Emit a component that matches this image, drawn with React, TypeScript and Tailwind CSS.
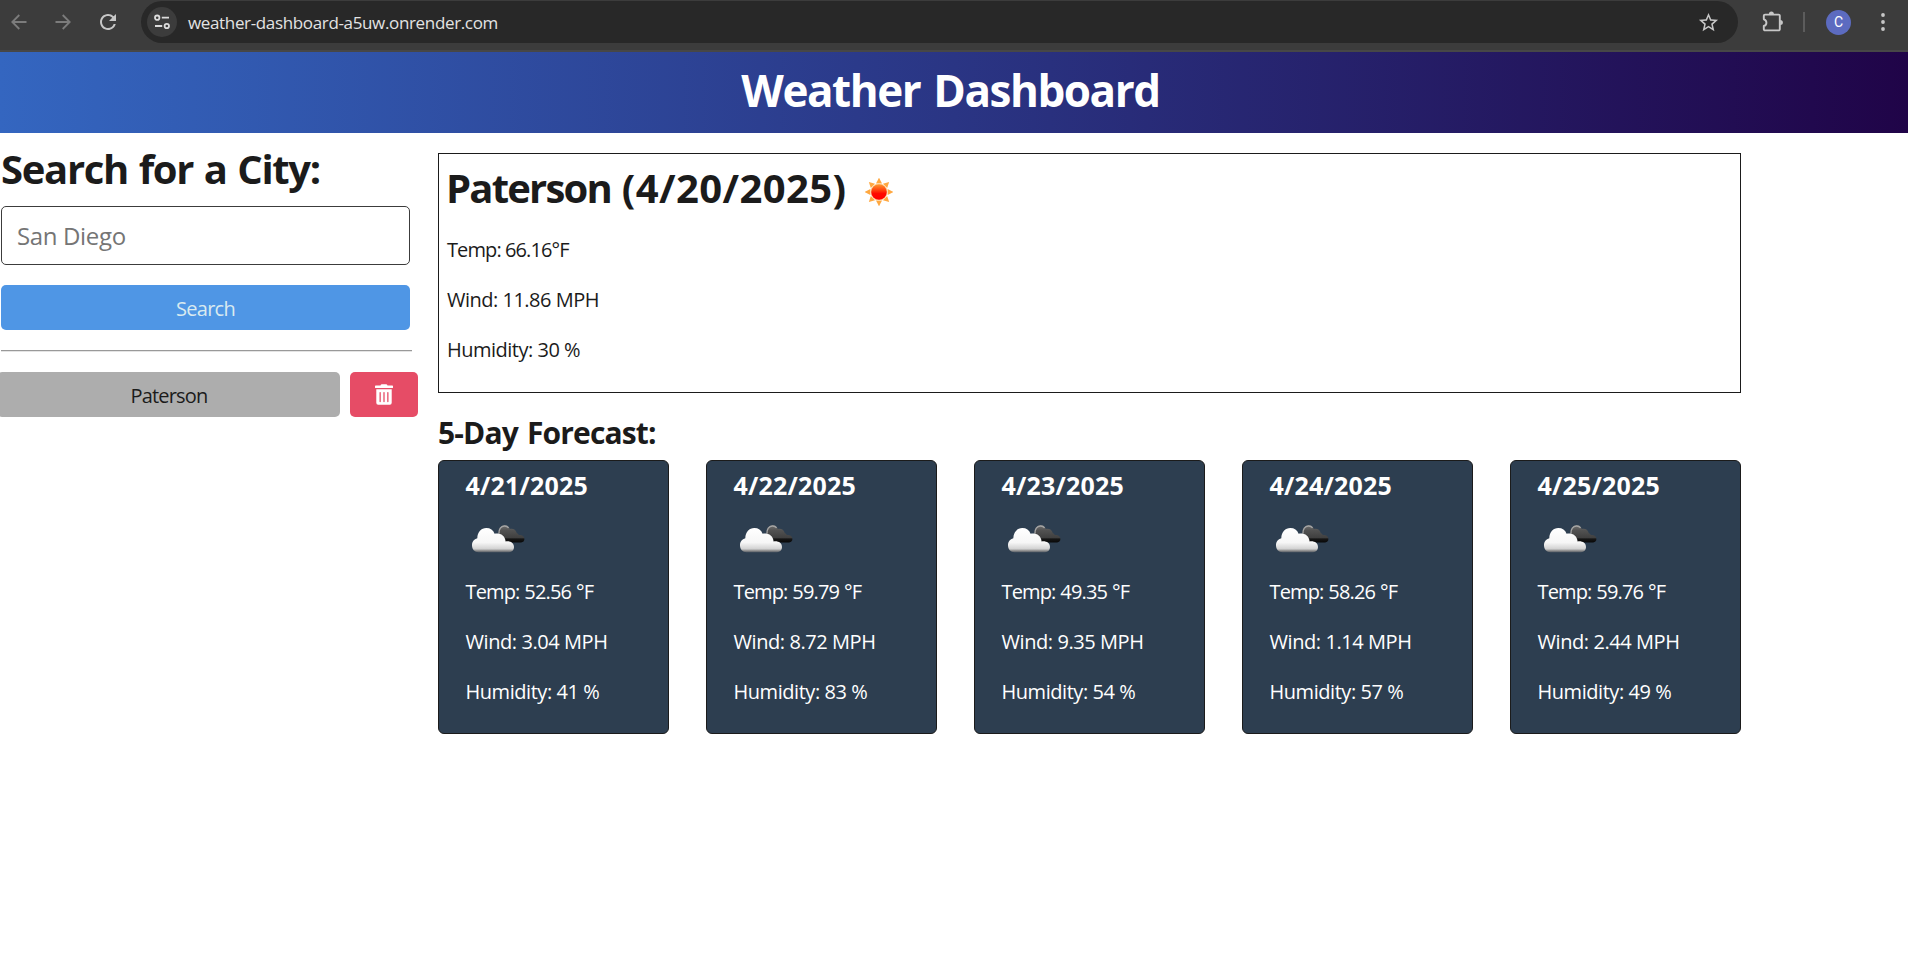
import { FaTrashAlt } from "react-icons/fa";
import { MdRefresh, MdStarBorder } from "react-icons/md";

type Day = { date: string; temp: string; wind: string; humidity: string };

const forecast: Day[] = [
  { date: "4/21/2025", temp: "52.56", wind: "3.04", humidity: "41" },
  { date: "4/22/2025", temp: "59.79", wind: "8.72", humidity: "83" },
  { date: "4/23/2025", temp: "49.35", wind: "9.35", humidity: "54" },
  { date: "4/24/2025", temp: "58.26", wind: "1.14", humidity: "57" },
  { date: "4/25/2025", temp: "59.76", wind: "2.44", humidity: "49" },
];

function ArrowIcon({ flip = false }: { flip?: boolean }) {
  return (
    <svg
      viewBox="0 0 16 16"
      className={flip ? "h-4 w-4 rotate-180" : "h-4 w-4"}
      fill="none"
      stroke="#7c7c7c"
      strokeWidth="1.8"
    >
      <path d="M15.5 8H1.5M8.3 1 1.3 8l7 7" />
    </svg>
  );
}

function TuneIcon() {
  return (
    <svg viewBox="0 0 16 16" className="h-4 w-4" fill="none" stroke="#dcdcdc" strokeWidth="1.8">
      <circle cx="3.2" cy="3.7" r="2.2" />
      <path d="M7.8 3.7H15M1 12H8.2" />
      <circle cx="12.8" cy="12" r="2.2" />
    </svg>
  );
}

function PuzzleIcon() {
  return (
    <svg viewBox="0 0 22 22" className="h-[22px] w-[22px]">
      <path
        d="M3 3.6H16.6a1.2 1.2 0 0 1 1.2 1.2V18.2a1.2 1.2 0 0 1-1.2 1.2H3a1.2 1.2 0 0 1-1.2-1.2V15C5.300 14 5.300 9.300 1.800 8.300V4.800A1.200 1.200 0 0 1 3 3.600z"
        fill="none"
        stroke="#c7c7c7"
        strokeWidth="1.9"
        strokeLinejoin="round"
      />
      <path d="M6.900 3.200a2.500 2.700 0 0 1 5 0zM18.200 9.100a2.700 2.500 0 0 1 0 5z" fill="#c7c7c7" />
    </svg>
  );
}

function SunIcon() {
  return (
    <svg viewBox="-14 -14 28 28" className="h-7 w-7">
      <defs>
        <linearGradient id="sun" x1="0" y1="0" x2="0" y2="1">
          <stop offset="0" stopColor="#ff9a30" />
          <stop offset="0.35" stopColor="#ff4a10" />
          <stop offset="0.6" stopColor="#ff0a00" />
          <stop offset="1" stopColor="#ff0000" />
        </linearGradient>
      </defs>
      {[0, 45, 90, 135, 180, 225, 270, 315].map((a) => (
        <path key={a} d="M0-14.300 3-8.600H-3Z" fill="#ffa840" transform={`rotate(${a})`} />
      ))}
      <circle r="8.700" fill="#ffd9a8" />
      <circle r="7.800" fill="url(#sun)" />
    </svg>
  );
}

function CloudsIcon() {
  return (
    <svg viewBox="0 0 53 28" className="h-7 w-[53px]">
      <defs>
        <linearGradient id="dark" x1="0" y1="0" x2="0" y2="1">
          <stop offset="0" stopColor="#707070" />
          <stop offset="0.3" stopColor="#525252" />
          <stop offset="0.72" stopColor="#404040" />
          <stop offset="0.8" stopColor="#161616" />
          <stop offset="1" stopColor="#080808" />
        </linearGradient>
        <linearGradient id="light" x1="0" y1="0" x2="0" y2="1">
          <stop offset="0" stopColor="#ffffff" />
          <stop offset="0.6" stopColor="#f6f6f6" />
          <stop offset="0.86" stopColor="#d2d2d2" />
          <stop offset="0.94" stopColor="#8c8c8c" />
          <stop offset="1" stopColor="#5a6068" />
        </linearGradient>
      </defs>
      <path
        d="M26.500 8.500C26.500 3.500 29 .300 32.600 .300c2.600 0 4.400 1.400 5.300 3.700 3.300-.700 5.900 .700 7 4.300 1.100 .300 1.600 1 1.900 1.800 3.300-.300 5.500 1.200 5.600 3.700 .100 2-1 3.600-3.300 3.600H33z"
        fill="url(#dark)"
      />
      <path d="M27 8.500C26.700 4 29 1.200 32.400 1c1.900-.100 3.300 .600 4.200 1.800" fill="none" stroke="#a4a4a4" strokeWidth="1.400" />
      <path
        d="M6.500 27.200C2.500 27.200 0 24 0 20.200c0-3.400 2-6.200 5.300-7C5.500 7.200 9.300 3.100 14.300 3.100c4 0 7 2 8.300 5.600 5.400-1 10.400 1.600 11 7.700 4.600-.700 8.400 1.500 8.400 5.600 0 3-2 5.200-5 5.200z"
        fill="url(#light)"
      />
    </svg>
  );
}

function BrowserBar() {
  return (
    <div className="flex h-[52px] items-start border-b-2 border-[#474747] bg-[#3c3c3c] pt-px">
      <div className="flex h-[42px] w-[141px] items-center pl-[11px]">
        <ArrowIcon />
        <span className="ml-7 flex">
          <ArrowIcon flip />
        </span>
        <MdRefresh className="ml-[25px] h-6 w-6 text-[#c7c7c7]" />
      </div>
      <div className="flex h-[42px] w-[1597px] items-center rounded-full bg-[#282828] pl-1.5">
        <span className="flex h-[30px] w-[30px] items-center justify-center rounded-full bg-[#3c3c3c]">
          <TuneIcon />
        </span>
        <span className="ml-[11px] flex-1 pt-0.5 text-[17px] leading-6 tracking-[-0.35px] text-[#e3e3e3]">
          weather-dashboard-a5uw.onrender.com
        </span>
        <MdStarBorder className="mr-[18px] h-[23px] w-[23px] text-[#c7c7c7]" />
      </div>
      <div className="flex h-[42px] items-center pl-6">
        <PuzzleIcon />
        <span className="ml-[19px] h-5 w-0.5 bg-[#5c5c5c]" />
        <span className="ml-[21px] flex h-[25px] w-[25px] items-center justify-center rounded-full bg-[#5c6bc0] font-[Roboto] text-sm text-white">
          C
        </span>
        <svg viewBox="0 0 4 18" className="ml-[30px] h-[18px] w-1" fill="#c7c7c7">
          <circle cx="2" cy="2" r="1.900" />
          <circle cx="2" cy="9" r="1.900" />
          <circle cx="2" cy="16" r="1.900" />
        </svg>
      </div>
    </div>
  );
}

function SearchPanel() {
  return (
    <aside className="w-[438px] pt-3">
      <h2 className="pl-px text-[40px] leading-[48px] font-bold tracking-[-1.3px] whitespace-nowrap [word-spacing:1.5px]">
        Search for a City:
      </h2>
      <form className="mt-[13px] ml-px w-[409px]" onSubmit={(e) => e.preventDefault()}>
        <input
          placeholder="San Diego"
          className="block h-[59px] w-full rounded-[5px] border border-[#3c3c3c] px-[15px] text-2xl tracking-[-0.35px] placeholder:text-[#757575] placeholder:opacity-100"
        />
        <button className="mt-5 block h-[45px] w-full rounded-[5px] bg-[#4f96e5] pt-0.5 text-[20px] tracking-[-0.7px] text-[#d9eaf0]">
          Search
        </button>
      </form>
      <hr className="mt-5 ml-px h-0.5 w-[411px] border-t border-b border-t-[#999999] border-b-[#e4e4e4]" />
      <div className="mt-5 flex gap-2.5">
        <button className="-ml-[3px] h-[45px] w-[343px] rounded-[5px] bg-[#adadad] pt-0.5 pl-px text-[20px] tracking-[-0.8px]">
          Paterson
        </button>
        <button aria-label="Delete" className="flex h-[45px] w-[68px] items-center justify-center rounded-[5px] bg-[#e64c66] text-white">
          <FaTrashAlt className="h-[21px] w-[18px]" />
        </button>
      </div>
    </aside>
  );
}

function DayCard({ day }: { day: Day }) {
  return (
    <article className="h-[274px] w-[231px] rounded-md border border-[#1b1b1b] bg-[#2d3e50] pt-[9px] pl-[26.5px] text-[20px] leading-[30px] text-white">
      <h4 className="text-[25px] leading-[30px] font-bold tracking-[0.2px]">{day.date}</h4>
      <div className="mb-6 ml-[6.5px] flex h-[53px] items-end">
        <CloudsIcon />
      </div>
      <p className="tracking-[-0.85px] [word-spacing:0.5px]">Temp: {day.temp} °F</p>
      <p className="mt-5 tracking-[-0.43px]">Wind: {day.wind} MPH</p>
      <p className="mt-5 tracking-[-0.45px]">Humidity: {day.humidity} %</p>
    </article>
  );
}

export default function App() {
  return (
    <div className="h-[958px] overflow-hidden bg-white font-['Open_Sans',sans-serif] text-[#1b1b1b]">
      <BrowserBar />
      <header className="h-[81px] bg-[linear-gradient(to_right,#3466c0,#200448)] pt-[11px] pr-[7px] text-center">
        <h1 className="text-[44px] leading-[54px] font-bold tracking-[-1.45px] text-white [word-spacing:3px]">
          Weather Dashboard
        </h1>
      </header>
      <main className="flex">
        <SearchPanel />
        <div className="w-[1303px] pt-5">
          <section className="h-[240px] border border-[#1b1b1b] pt-2.5 pl-2 text-[20px] leading-[30px]">
            <div className="flex items-center">
              <h3 className="text-[40px] leading-[48px] font-bold tracking-[0.4px]">
                <span className="-ml-px tracking-[-1.8px]">Paterson</span> (4/20/2025)
              </h3>
              <span className="mt-2 ml-[19px] flex">
                <SunIcon />
              </span>
            </div>
            <p className="mt-[23px] tracking-[-0.9px]">Temp: 66.16°F</p>
            <p className="mt-5 tracking-[-0.5px]">Wind: 11.86 MPH</p>
            <p className="mt-5 tracking-[-0.5px]">Humidity: 30 %</p>
          </section>
          <h4 className="mt-[22px] text-[30px] leading-9 font-bold tracking-[-0.85px] [word-spacing:2px]">
            5-Day Forecast:
          </h4>
          <div className="mt-[9px] flex justify-between">
            {forecast.map((d) => (
              <DayCard key={d.date} day={d} />
            ))}
          </div>
        </div>
      </main>
    </div>
  );
}
